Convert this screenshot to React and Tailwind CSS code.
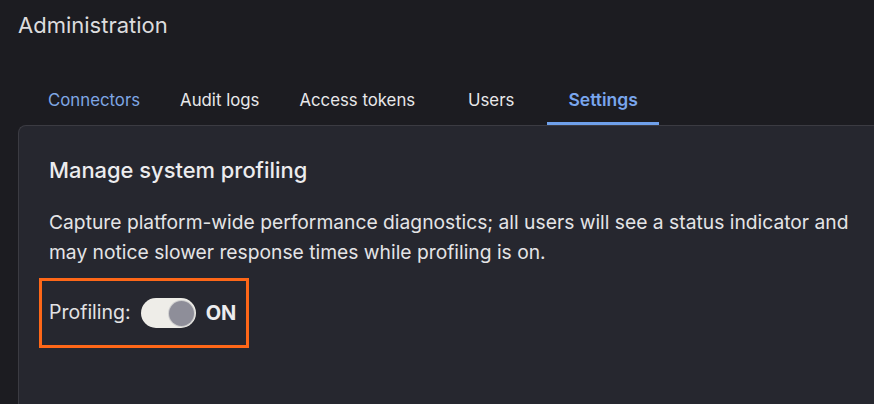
import { useState } from "react";

const tabs = ["Connectors", "Audit logs", "Access tokens", "Users", "Settings"];

const App = () => {
  const [active, setActive] = useState("Settings");
  const [profiling, setProfiling] = useState(true);

  return (
    <div
      className="h-screen w-full overflow-hidden bg-[#1c1c21] pl-[18px] pt-[11px] text-[#e6e6e8]"
      style={{ fontFamily: "Inter, 'Noto Sans', sans-serif" }}
    >
      {/* Page title */}
      <h1 className="text-[22px] leading-[28px] font-normal text-[#dcdcde]">Administration</h1>

      {/* Tabs */}
      <div className="mt-[38px] ml-[10px] flex h-[48px]">
        {tabs.map((t) => {
          const isActive = t === active;
          return (
            <button
              key={t}
              onClick={() => setActive(t)}
              className={
                isActive
                  ? "min-w-[112px] px-5 h-full border-b-[3px] border-[#6fa0ea] pt-[2px] text-[17.5px] font-semibold text-[#79a6ee]"
                  : t === "Connectors"
                  ? "min-w-[112px] px-5 h-full border-b-[3px] border-transparent pt-[2px] text-[16.8px] text-[#7fa6e4]"
                  : "min-w-[112px] px-5 h-full border-b-[3px] border-transparent pt-[2px] text-[16.8px] text-[#e8e8ea]"
              }
            >
              {t}
            </button>
          );
        })}
      </div>

      {/* Card */}
      <div className="h-[400px] rounded-tl-[8px] border-l border-t border-[#3b3b42] bg-[#26272f] pl-[30px] pt-[30px]">
        <h2 className="text-[21.9px] leading-[28px] font-medium text-[#ececee]">Manage system profiling</h2>
        <p className="mt-[23px] w-[820px] text-[19.25px] leading-[30px] text-[#e4e4e6]">
          Capture platform-wide performance diagnostics; all users will see a status indicator and may notice
          slower response times while profiling is on.
        </p>

        <div className="mt-[11px] -ml-[10px] inline-flex h-[70px] items-center gap-[10px] border-[3px] border-[#fe6718] pl-[7px] pr-[10px]">
          <span className="text-[19.5px] text-[#e2e2e4]">Profiling:</span>
          <button
            onClick={() => setProfiling(!profiling)}
            className="flex h-[30px] w-[55px] items-center rounded-full bg-[#eeede8] px-[2px]"
          >
            <span
              className={
                profiling
                  ? "ml-auto h-[25px] w-[25px] rounded-full bg-[#8e8e99] ring-1 ring-[#d0d0d0]"
                  : "h-[25px] w-[25px] rounded-full bg-[#8e8e99] ring-1 ring-[#d0d0d0]"
              }
            />
          </button>
          <span className="text-[20px] font-bold text-[#ececee]">{profiling ? "ON" : "OFF"}</span>
        </div>
      </div>
    </div>
  );
};

export default App;
